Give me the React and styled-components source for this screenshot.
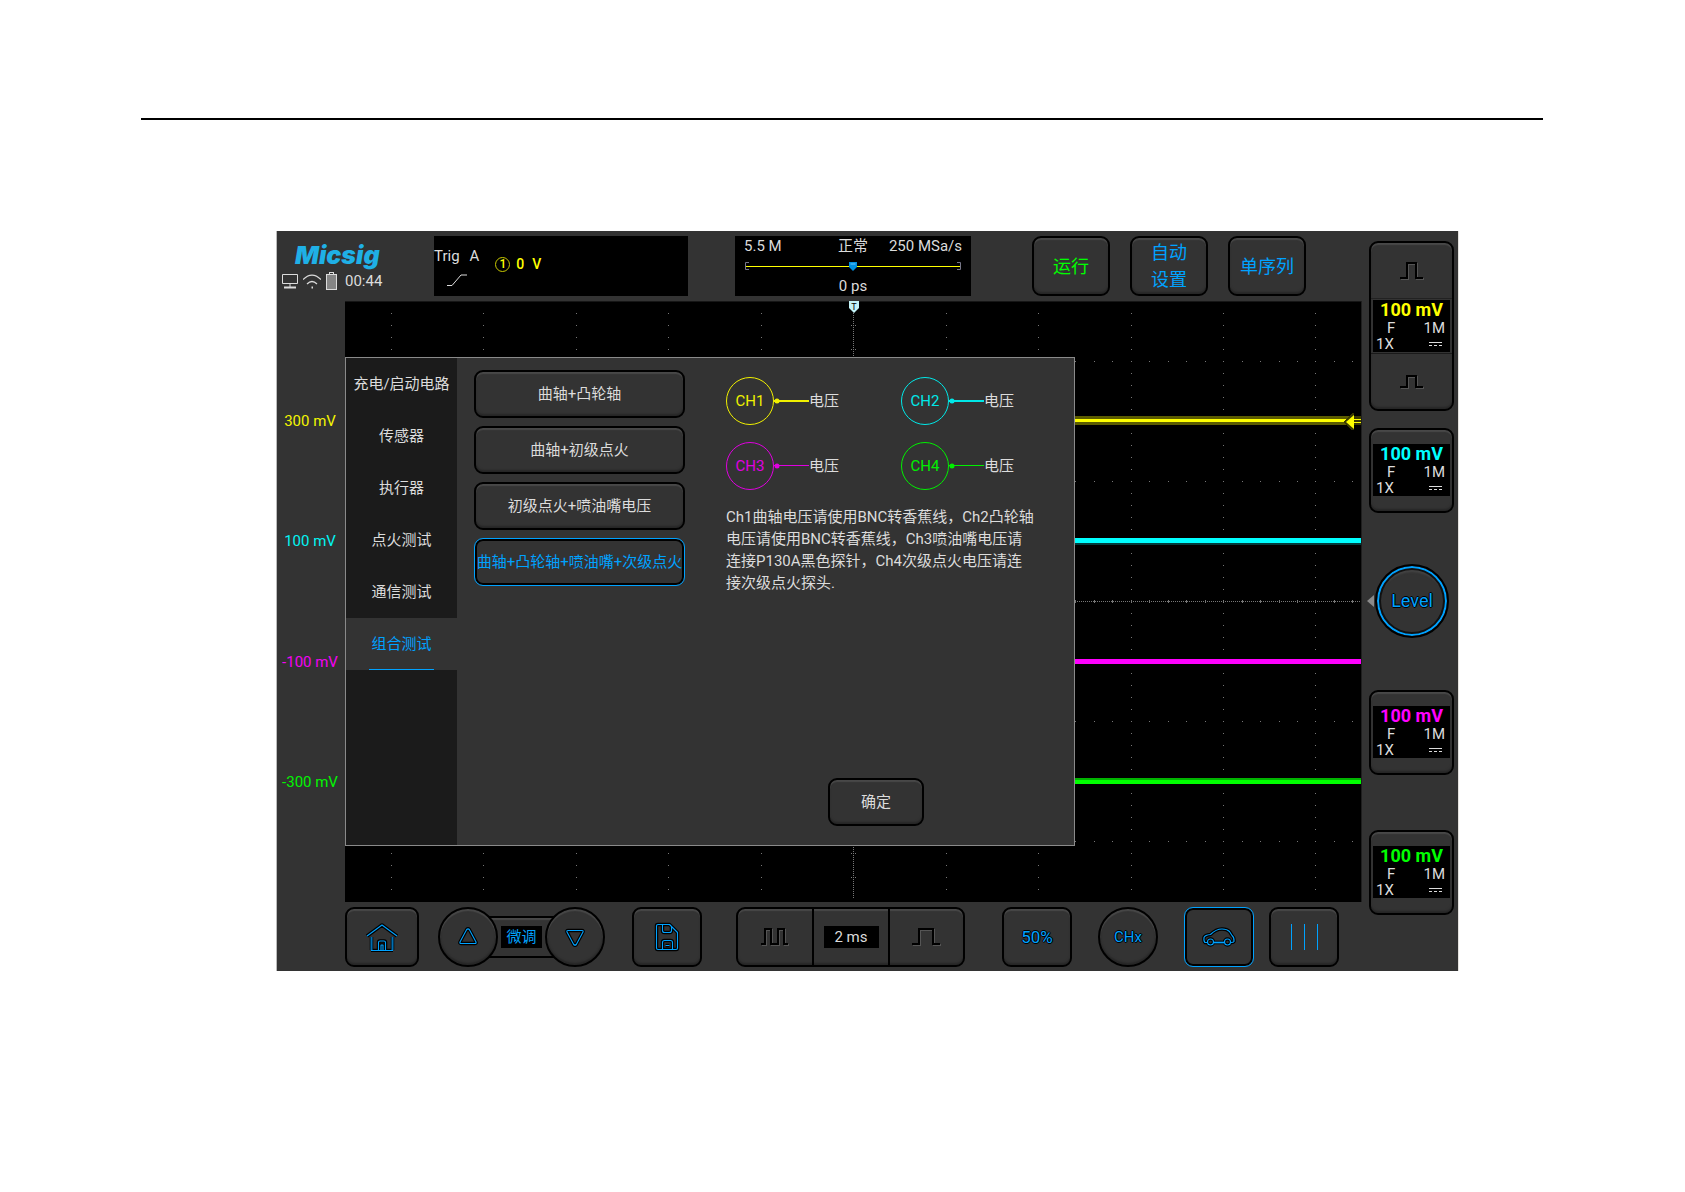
import React from "react";
import styled, { createGlobalStyle, css } from "styled-components";

const BLUE = "#00a2ff";
const YELLOW = "#ffff00";
const CYAN = "#00ffff";
const MAGENTA = "#ff00ff";
const GREEN = "#00ff00";
const TEXT = "#dcdcdc";

const GlobalStyle = createGlobalStyle`
  *, *::before, *::after { box-sizing: border-box; }
  body {
    margin: 0;
    background: #fff;
    color: ${TEXT};
    font: 15px/20px Roboto, "Noto Sans CJK SC", sans-serif;
  }
  button {
    margin: 0;
    padding: 0;
    border: 0;
    background: none;
    color: inherit;
    font: inherit;
    cursor: pointer;
  }
  svg { display: block; flex: none; }
`;

const Page = styled.div`
  padding: 118px 142px 0 141px;
`;

const Rule = styled.hr`
  margin: 0 0 111px;
  border: 0;
  height: 2px;
  background: #000;
`;

const Device = styled.main`
  display: flex;
  margin: 0 85px 0 136px;
  background: #333;
  box-shadow: -1px 0 #bbb, 1px 0 #e4e2de;
`;

const MainColumn = styled.div`
  flex: 1;
  min-width: 0;
  display: flex;
  flex-direction: column;
`;

const raised = css`
  border: 2px solid #000;
  border-radius: 9px;
  background: #333;
  box-shadow: inset 0 2px 1px #484848, inset 0 -2px 2px #262626;
`;

/* ---------- header ---------- */

const Header = styled.header`
  display: flex;
  height: 70px;
  padding: 5px 0;
`;

const Brand = styled.div`
  width: 157px;
  padding: 5px 0 0 5px;
`;

const Logo = styled.div`
  padding-left: 13px;
  color: #1fb0e6;
  font-family: Inter, Roboto, sans-serif;
  font-size: 25px;
  line-height: 28px;
  font-weight: 900;
  font-style: italic;
`;

const Status = styled.div`
  display: flex;
  align-items: center;
  gap: 5px;
`;

const Clock = styled.span`
  padding-left: 2px;
  line-height: 24px;
`;

const TriggerBox = styled.section`
  display: flex;
  gap: 16px;
  width: 254px;
  background: #000;
`;

const TriggerKind = styled.div`
  display: flex;
  flex-direction: column;
  gap: 8px;
  padding-top: 10px;

  svg { margin-left: 13px; }
`;

const TriggerName = styled.div`
  display: flex;
  gap: 10px;
`;

const TriggerLevel = styled.div`
  display: flex;
  align-items: center;
  gap: 6px;
  height: 56px;
  color: ${YELLOW};
  font-size: 14px;
  font-weight: 500;
`;

const TriggerVolts = styled.span`
  display: flex;
  gap: 8px;
`;

const SourceBadge = styled.span`
  display: grid;
  place-items: center;
  width: 15px;
  height: 15px;
  border: 1px solid #c8c800;
  border-radius: 50%;
  font-size: 12px;
  line-height: 12px;
`;

const AcquireBox = styled.section`
  display: flex;
  flex-direction: column;
  width: 236px;
  margin-left: 47px;
  padding: 0 9px;
  background: #000;
`;

const AcquireRow = styled.div`
  display: grid;
  grid-template-columns: 1fr auto 1fr;

  span:last-child { text-align: right; }
`;

const MemoryBarWrap = styled.div`
  display: flex;
  justify-content: center;
  padding: 4px 0;
`;

const Offset = styled.div`
  text-align: center;
`;

const RunButtons = styled.div`
  display: flex;
  gap: 20px;
  margin-left: 61px;
`;

const RunButton = styled.button`
  ${raised}
  width: 78px;
  height: 60px;
  color: ${(p) => p.$color};
  font-size: 18px;
  line-height: 27px;
  white-space: nowrap;
  display: flex;
  flex-direction: column;
  align-items: center;
  justify-content: center;
`;

/* ---------- middle ---------- */

const Middle = styled.div`
  display: flex;
  height: 601px;
`;

const Scale = styled.div`
  display: flex;
  flex-direction: column;
  width: 68px;
  padding: 60px 0;
`;

const ScaleLabel = styled.div`
  flex: 1;
  display: flex;
  align-items: center;
  justify-content: center;
  color: ${(p) => p.$color};
  padding-right: 2px;
  opacity: 0.95;
`;

const Plot = styled.div`
  position: relative;
  flex: 1;
  background: #000;
  border-right: 1px solid #1f1f1f;
`;

const PlotSvg = styled.svg`
  width: 100%;
  height: 100%;
`;

const Dialog = styled.section`
  position: absolute;
  left: 0;
  top: 56px;
  display: flex;
  width: 730px;
  height: 489px;
  border: 1px solid #8a8a8a;
  background: #333;
`;

const Tabs = styled.nav`
  display: flex;
  flex: none;
  flex-direction: column;
  width: 111px;
  background: #1b1b1b;
`;

const Tab = styled.button`
  height: 52px;
  color: ${(p) => (p.$active ? BLUE : TEXT)};
  background: ${(p) => (p.$active ? "#333" : "transparent")};
  display: flex;
  flex-direction: column;
  align-items: center;
  justify-content: center;
  white-space: nowrap;

  ${(p) =>
    p.$active &&
    css`
      position: relative;
      &::after {
        content: "";
        position: absolute;
        bottom: 0;
        width: 65px;
        height: 1px;
        background: ${BLUE};
      }
    `}
`;

const Choices = styled.div`
  display: flex;
  flex: none;
  flex-direction: column;
  gap: 8px;
  padding: 12px 0 0 17px;
`;

const Choice = styled.button`
  ${raised}
  width: 211px;
  height: 48px;
  white-space: nowrap;
  ${(p) =>
    p.$active &&
    css`
      color: ${BLUE};
      border: 1px solid ${BLUE};
      box-shadow: inset 0 0 0 2px #000;
    `}
`;

const Wiring = styled.div`
  flex: 1;
  display: flex;
  flex-direction: column;
  padding: 19px 0 19px 41px;
`;

const Probes = styled.div`
  display: grid;
  grid-template-columns: 175px 175px;
  row-gap: 17px;
`;

const Probe = styled.div`
  display: flex;
  align-items: center;
`;

const ProbeRing = styled.span`
  display: grid;
  place-items: center;
  width: 48px;
  height: 48px;
  border: 1px solid ${(p) => p.$color};
  border-radius: 50%;
  color: ${(p) => p.$color};
`;

const ProbeWire = styled.svg`
  width: 35px;
  height: 6px;
`;

const Hint = styled.p`
  margin: 16px 0 0;
  line-height: 22px;
  white-space: nowrap;
`;

const Confirm = styled.button`
  ${raised}
  width: 96px;
  height: 48px;
  margin: auto 0 0 102px;
`;

/* ---------- side column ---------- */

const Side = styled.aside`
  display: flex;
  flex-direction: column;
  width: 96px;
  padding: 10px 0 0 7px;
`;

const ChannelCard = styled.section`
  ${raised}
  width: 85px;
  margin-top: ${(p) => p.$space || 0}px;
  padding: 14px 2px 15px;
`;

const ChannelStack = styled(ChannelCard)`
  padding: 0;
`;

const Pulse = styled.button`
  display: flex;
  align-items: center;
  justify-content: center;
  width: 100%;
  height: 55px;
`;

const StackBody = styled.div`
  padding: 1px 2px;
  border-top: 1px solid #222;
  border-bottom: 1px solid #1a1a1a;
`;

const Reading = styled.div`
  background: #000;
  line-height: 16px;
`;

const Volts = styled.div`
  color: ${(p) => p.$color};
  font-size: 18px;
  font-weight: 700;
  line-height: 20px;
  text-align: center;
`;

const ReadingRow = styled.div`
  display: flex;
  align-items: center;
  justify-content: space-between;
  height: 16px;
  padding: ${(p) => (p.$indent ? "0 5px 0 14px" : "0 8px 0 3px")};
`;

const LevelRow = styled.div`
  display: flex;
  align-items: center;
  margin: 51px 0 0 -3px;
  gap: 1px;
`;

const LevelKnob = styled.button`
  width: 74px;
  height: 74px;
  border: 2px solid #000;
  border-radius: 50%;
  background: #333;
  box-shadow: inset 0 0 0 2px ${BLUE}, inset 0 0 0 4px #111, inset 0 6px 2px #444;
  color: ${BLUE};
  font-size: 18px;
  text-shadow: 1px 0 #000, -1px 0 #000, 0 1px #000, 0 -1px #000;
`;

/* ---------- toolbar ---------- */

const Toolbar = styled.footer`
  display: flex;
  align-items: flex-start;
  height: 69px;
  padding: 5px 0 0 68px;
`;

const Tool = styled.button`
  ${raised}
  display: flex;
  align-items: center;
  justify-content: center;
  width: ${(p) => (p.$round ? 60 : p.$wide ? 74 : 70)}px;
  height: 60px;
  margin-left: ${(p) => p.$space || 0}px;
  border-radius: ${(p) => (p.$round ? "50%" : "9px")};
  ${(p) =>
    p.$active &&
    css`
      border: 1px solid ${BLUE};
      box-shadow: inset 0 0 0 2px #000;
    `}
`;

const Stepper = styled.div`
  display: flex;
  align-items: center;
  margin-left: 19px;

  ${Tool} { position: relative; z-index: 1; }
`;

const StepperStrip = styled.div`
  display: flex;
  align-items: center;
  justify-content: center;
  width: 67px;
  height: 42px;
  margin: 0 -10px;
  border: 2px solid #000;
  background: #333;
  box-shadow: inset 0 2px 1px #484848;
`;

const Readout = styled.span`
  display: grid;
  place-items: center;
  width: ${(p) => p.$width}px;
  height: 22px;
  background: #000;
  color: ${(p) => p.$color || TEXT};
`;

const Timebase = styled.div`
  ${raised}
  display: grid;
  grid-template-columns: 74px 76px 1fr;
  width: 229px;
  height: 60px;
  margin-left: 34px;
`;

const TimeCell = styled.button`
  display: flex;
  align-items: center;
  justify-content: center;

  & + & { border-left: 2px solid #000; }
`;

const OutlineText = styled.span`
  color: ${BLUE};
  font-size: ${(p) => p.$size}px;
  text-shadow: 1px 0 #000, -1px 0 #000, 0 1px #000, 0 -1px #000;
`;

/* ---------- drawings ---------- */

function Glyph({ w, h, d, dim }) {
  return (
    <svg width={w} height={h} viewBox={`0 0 ${w} ${h}`} fill="none" strokeLinejoin="round" aria-hidden="true">
      <path d={(dim || "") + d} stroke="#000" strokeWidth="3.500" />
      {dim && <path d={dim} stroke="#006fb2" strokeWidth="2" />}
      <path d={d} stroke={BLUE} strokeWidth="1.100" />
    </svg>
  );
}

function Wave({ w, h, d }) {
  return (
    <svg width={w} height={h} viewBox={`0 0 ${w} ${h}`} fill="none" aria-hidden="true">
      <path d={d} stroke="#555" strokeWidth="2" transform="translate(1 1)" />
      <path d={d} stroke="#000" strokeWidth="2" />
    </svg>
  );
}

const SINGLE = "M0 16H7V1H16V16H23";

function Monitor() {
  return (
    <svg width="16" height="16" viewBox="0 0 16 16" fill="none" stroke={TEXT} aria-hidden="true">
      <path d="M.5 1.500h15v9H.5zM8 11v3" />
      <path d="M2 14.500h12" strokeWidth="2" />
    </svg>
  );
}

function Wifi() {
  return (
    <svg width="18" height="16" viewBox="0 0 18 16" fill="none" stroke={TEXT} strokeWidth="1.200" aria-hidden="true">
      <path d="M0 6.500Q9-2.500 18 6.500M4 11q5-5 10 0" />
      <path d="M8.500 14.500h1.500" strokeWidth="2" />
    </svg>
  );
}

function Battery() {
  return (
    <svg width="12" height="18" viewBox="0 0 12 18" aria-hidden="true">
      <rect x="3.500" y=".5" width="4" height="2" fill="none" stroke={TEXT} />
      <rect x=".5" y="2.500" width="10" height="15" fill="#858585" stroke={TEXT} />
    </svg>
  );
}

function MemoryBar() {
  return (
    <svg width="217" height="12" viewBox="0 0 217 12" aria-hidden="true">
      <path d="M4 2.500H.5v7H4M212 2.500h3.500v7H212" fill="none" stroke="#778" />
      <path d="M1 6.500h214" stroke={YELLOW} />
      <path d="M104 2h8v5l-4 4-4-4z" fill="#0090e0" />
      <path d="M105.500 4h5" stroke="#6ac8ff" />
    </svg>
  );
}

const COLUMNS = [46, 138, 231, 323, 416, 601, 693, 786, 878, 970];
const ROWS = [60, 180, 420, 540];

function Traces() {
  return (
    <PlotSvg viewBox="0 0 1016 601" preserveAspectRatio="none" shapeRendering="crispEdges" role="img" aria-label="波形">
      <rect width="1016" height="1" fill="#161616" />
      <g fill="none" stroke="#777">
        {COLUMNS.map((x) => (
          <path key={x} d={`M${x + 0.5} 12V600`} strokeDasharray="1 11" />
        ))}
        {ROWS.map((y) => (
          <path key={y} d={`M9 ${y + 0.5}H1010`} strokeDasharray="1 17.490" />
        ))}
        <path d="M508.500 12V598" strokeDasharray="1 1" />
        <path d="M506.500 24V598M510.500 24V598" strokeDasharray="1 23" />
        <path d="M0 300.500H1016" strokeDasharray="1 1" />
        <path d="M9 300.500H1016" strokeWidth="3" strokeDasharray="1 17.490" />
      </g>
      <rect y="115" width="1016" height="9" fill="#5c5c00" />
      <rect y="118" width="1016" height="3" fill={YELLOW} />
      <rect y="237" width="1016" height="5" fill={CYAN} />
      <path d="M0 243H1016" stroke="#003c3c" strokeWidth="2" />
      <rect y="358" width="1016" height="5" fill={MAGENTA} />
      <rect y="477" width="1016" height="2" fill="#00b400" />
      <rect y="479" width="1016" height="4" fill={GREEN} />
      <path d="M998 121l9-9h2v3h7v9h-7v5h-2z" fill="#3a3a00" />
      <path d="M1001 121l8-7v14z" fill={YELLOW} shapeRendering="auto" />
      <path d="M1009 118.500h7M1009 121.500h7" stroke={YELLOW} />
      <path d="M504 0h10v7l-5 5-5-5z" fill="#c4f4f8" shapeRendering="auto" />
      <text x="509" y="9" textAnchor="middle" fontSize="9" fill="#000">T</text>
    </PlotSvg>
  );
}

/* ---------- parts ---------- */

function ChannelReading({ color }) {
  return (
    <Reading>
      <Volts $color={color}>100 mV</Volts>
      <ReadingRow $indent>
        <span>F</span>
        <span>1M</span>
      </ReadingRow>
      <ReadingRow>
        <span>1X</span>
        <svg width="13" height="4" viewBox="0 0 13 4" stroke={TEXT} aria-hidden="true">
          <path d="M0 .5h13M0 3.500h3M5 3.500h3M10 3.500h3" />
        </svg>
      </ReadingRow>
    </Reading>
  );
}

const TABS = ["充电/启动电路", "传感器", "执行器", "点火测试", "通信测试", "组合测试"];
const CHOICES = ["曲轴+凸轮轴", "曲轴+初级点火", "初级点火+喷油嘴电压", "曲轴+凸轮轴+喷油嘴+次级点火"];
const PROBES = [
  { name: "CH1", color: "#f0f000", wire: 2 },
  { name: "CH2", color: "#00e8e8", wire: 2 },
  { name: "CH3", color: "#e000e0", wire: 1 },
  { name: "CH4", color: "#00f000", wire: 1 },
];
const SCALES = [
  ["300 mV", YELLOW],
  ["100 mV", CYAN],
  ["-100 mV", MAGENTA],
  ["-300 mV", GREEN],
];

export default function App() {
  return (
    <Page>
      <GlobalStyle />
      <Rule />
      <Device>
        <MainColumn>
          <Header>
            <Brand>
              <Logo>Micsig</Logo>
              <Status>
                <Monitor />
                <Wifi />
                <Battery />
                <Clock>00:44</Clock>
              </Status>
            </Brand>
            <TriggerBox>
              <TriggerKind>
                <TriggerName>
                  <span>Trig</span>
                  <span>A</span>
                </TriggerName>
                <svg width="20" height="12" viewBox="0 0 20 12" fill="none" stroke={TEXT} aria-hidden="true">
                  <path d="M0 11.500h5l9-10.500h6" />
                </svg>
              </TriggerKind>
              <TriggerLevel>
                <SourceBadge>1</SourceBadge>
                <TriggerVolts>
                  <span>0</span>
                  <span>V</span>
                </TriggerVolts>
              </TriggerLevel>
            </TriggerBox>
            <AcquireBox>
              <AcquireRow>
                <span>5.5 M</span>
                <span>正常</span>
                <span>250 MSa/s</span>
              </AcquireRow>
              <MemoryBarWrap>
                <MemoryBar />
              </MemoryBarWrap>
              <Offset>0 ps</Offset>
            </AcquireBox>
            <RunButtons>
              <RunButton $color={GREEN}>运行</RunButton>
              <RunButton $color={BLUE}>
                <span>自动</span>
                <span>设置</span>
              </RunButton>
              <RunButton $color={BLUE}>单序列</RunButton>
            </RunButtons>
          </Header>

          <Middle>
            <Scale>
              {SCALES.map(([label, color]) => (
                <ScaleLabel key={label} $color={color}>{label}</ScaleLabel>
              ))}
            </Scale>
            <Plot>
              <Traces />
              <Dialog>
                <Tabs>
                  {TABS.map((tab) => (
                    <Tab key={tab} $active={tab === "组合测试"}>{tab}</Tab>
                  ))}
                </Tabs>
                <Choices>
                  {CHOICES.map((choice, i) => (
                    <Choice key={choice} $active={i === 3}>{choice}</Choice>
                  ))}
                </Choices>
                <Wiring>
                  <Probes>
                    {PROBES.map((p) => (
                      <Probe key={p.name}>
                        <ProbeRing $color={p.color}>{p.name}</ProbeRing>
                        <ProbeWire viewBox="0 0 35 6" aria-hidden="true">
                          <circle cx="3" cy="3" r="2.500" fill={p.color} />
                          <rect x="0" y="2" width="35" height={p.wire} fill={p.color} />
                        </ProbeWire>
                        <span>电压</span>
                      </Probe>
                    ))}
                  </Probes>
                  <Hint>
                    Ch1曲轴电压请使用BNC转香蕉线，Ch2凸轮轴<br />
                    电压请使用BNC转香蕉线，Ch3喷油嘴电压请<br />
                    连接P130A黑色探针，Ch4次级点火电压请连<br />
                    接次级点火探头.
                  </Hint>
                  <Confirm>确定</Confirm>
                </Wiring>
              </Dialog>
            </Plot>
          </Middle>

          <Toolbar>
            <Tool $wide aria-label="主页">
              <Glyph
                w={32}
                h={29}
                dim="M5.500 14V27M26.500 14V27"
                d="M1 13L16 2L31 13M5 27.500H27M12.500 27V19.500q0-1.500 1.500-1.500h4q1.500 0 1.500 1.500V27M15 27v-5h2v5"
              />
            </Tool>
            <Stepper>
              <Tool $round aria-label="增大">
                <Glyph w={20} h={20} d="M8.700 2.500q1.300-1.300 2.600 0L18 15q.5 1.500-1 1.500H3q-1.500 0-1-1.500z" />
              </Tool>
              <StepperStrip>
                <Readout $width={41} $color={BLUE}>微调</Readout>
              </StepperStrip>
              <Tool $round aria-label="减小">
                <Glyph w={20} h={20} d="M8.700 17.500q1.300 1.300 2.600 0L18 5q.5-1.500-1-1.500H3Q1.500 3.500 2 5z" />
              </Tool>
            </Stepper>
            <Tool $space={27} aria-label="保存">
              <Glyph
                w={26}
                h={30}
                d="M4 2.500H15.500L23.500 10.500V26q0 1.500-1.500 1.500H4q-1.500 0-1.500-1.500V4q0-1.500 1.500-1.500zM8.500 2.500V8.500q0 2 2 2h5q2 0 2-2V5M8.500 27.500V20.500q0-2 2-2h6q2 0 2 2V27.500M11.500 23.500h4"
              />
            </Tool>
            <Timebase>
              <TimeCell aria-label="缩小时基">
                <Wave w={28} h={18} d="M0 16H4V1H10V16H17V1H23V16H27" />
              </TimeCell>
              <TimeCell>
                <Readout $width={55}>2 ms</Readout>
              </TimeCell>
              <TimeCell aria-label="放大时基">
                <Wave w={29} h={18} d="M0 16H7V1H21V16H28" />
              </TimeCell>
            </Timebase>
            <Tool $space={37}>
              <OutlineText $size={17}>50%</OutlineText>
            </Tool>
            <Tool $round $space={26}>
              <OutlineText $size={15}>CHx</OutlineText>
            </Tool>
            <Tool $active $space={26} aria-label="汽车">
              <Glyph
                w={34}
                h={20}
                dim="M12 15.500H22"
                d="M5 15.500H3q-1.500-1-1-5q1-2.500 6.500-3Q14 2 20 2q5 0 7.500 2.500L30 8.500q2.500 2 2 6q-.5 1-3 1M11.500 15a3 3 0 1 1-6 0a3 3 0 1 1 6 0M28.500 15a3 3 0 1 1-6 0a3 3 0 1 1 6 0M11.500 15.500H22.500"
              />
            </Tool>
            <Tool $space={15} aria-label="菜单">
              <svg width="27" height="26" viewBox="0 0 27 26" stroke={BLUE} shapeRendering="crispEdges" aria-hidden="true">
                <path d="M.5 0V26M13.500 0V26M26.500 0V26" />
              </svg>
            </Tool>
          </Toolbar>
        </MainColumn>

        <Side>
          <ChannelStack>
            <Pulse aria-label="增大幅度">
              <Wave w={24} h={18} d={SINGLE} />
            </Pulse>
            <StackBody>
              <ChannelReading color={YELLOW} />
            </StackBody>
            <Pulse aria-label="减小幅度">
              <Wave w={24} h={14} d="M0 12H7V1H16V12H23" />
            </Pulse>
          </ChannelStack>
          <ChannelCard $space={17}>
            <ChannelReading color={CYAN} />
          </ChannelCard>
          <LevelRow>
            <svg width="8" height="12" viewBox="0 0 8 12" aria-hidden="true">
              <path d="M1 6l7-6v12z" fill="#8a8a8a" />
            </svg>
            <LevelKnob>Level</LevelKnob>
          </LevelRow>
          <ChannelCard $space={52}>
            <ChannelReading color={MAGENTA} />
          </ChannelCard>
          <ChannelCard $space={55}>
            <ChannelReading color={GREEN} />
          </ChannelCard>
        </Side>
      </Device>
    </Page>
  );
}
